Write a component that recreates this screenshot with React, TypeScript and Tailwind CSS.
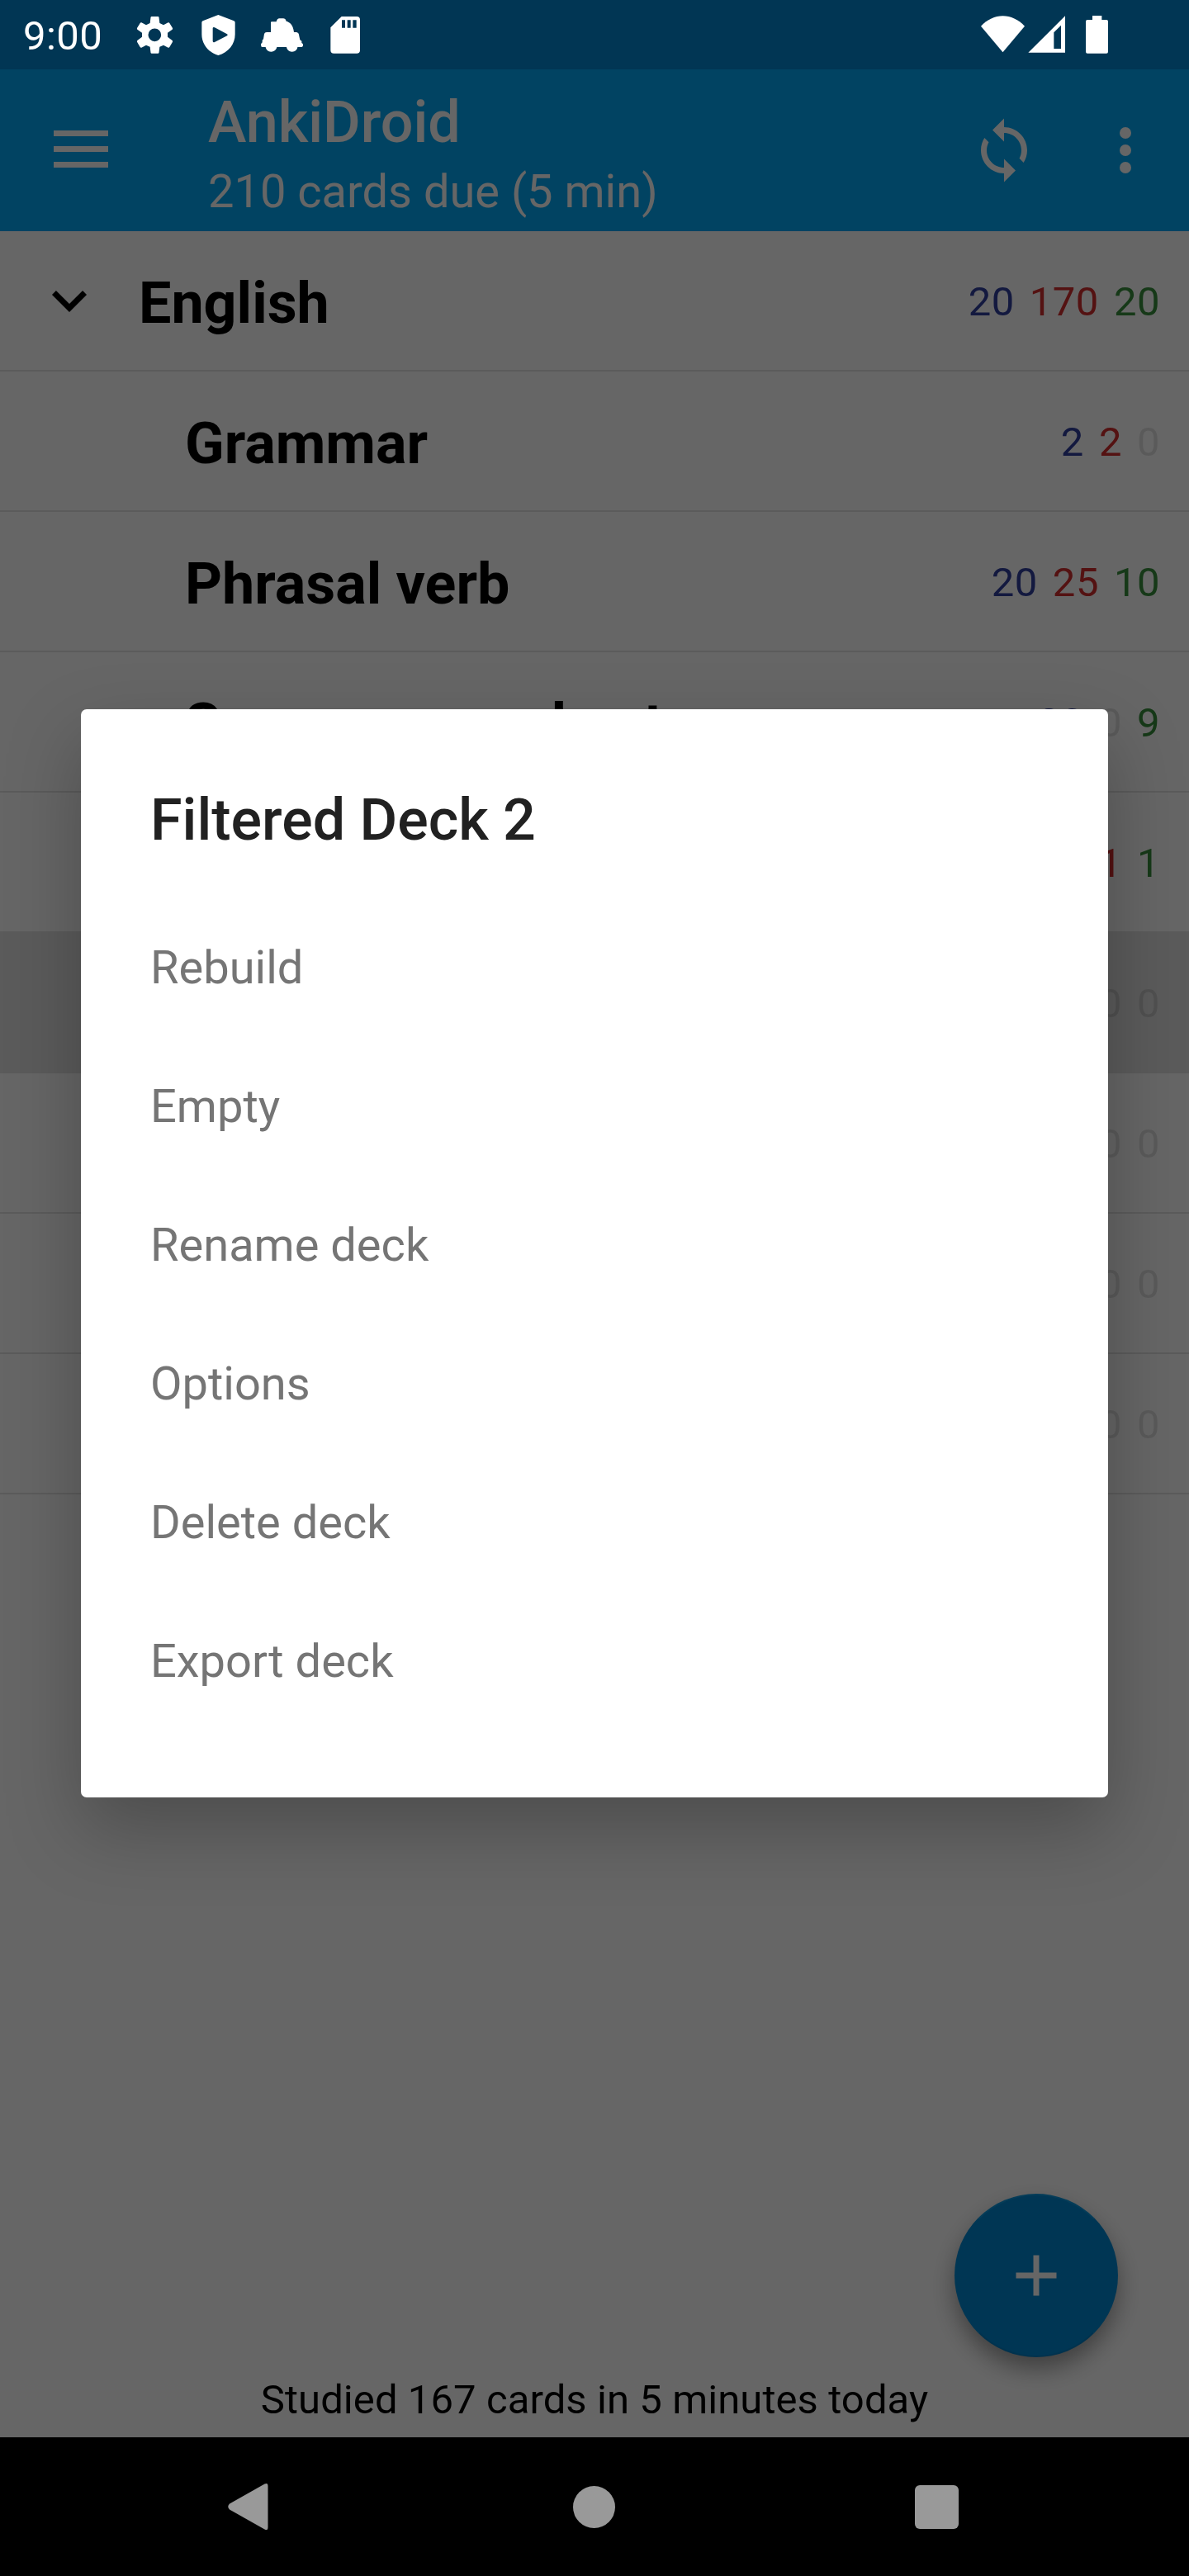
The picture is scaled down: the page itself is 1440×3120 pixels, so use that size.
import React from "react";

type Deck = {
  name: string;
  counts: [number, number, number];
  parent?: boolean;
  selected?: boolean;
};

const decks: Deck[] = [
  { name: "English", counts: [20, 170, 20], parent: true },
  { name: "Grammar", counts: [2, 2, 0] },
  { name: "Phrasal verb", counts: [20, 25, 10] },
  { name: "Synonyms and antonyms", counts: [20, 0, 9] },
  { name: "", counts: [0, 1, 1] },
  { name: "", counts: [0, 0, 0], selected: true },
  { name: "", counts: [0, 0, 0] },
  { name: "", counts: [0, 0, 0] },
  { name: "", counts: [0, 0, 0] },
];

const actions = ["Rebuild", "Empty", "Rename deck", "Options", "Delete deck", "Export deck"];

const countColors = ["text-[#303f9f]", "text-[#d32f2f]", "text-[#388e3c]"];

function StatusBar() {
  return (
    <header className="flex h-[84px] bg-[#013654] text-white">
      <div className="w-[162px] pt-[5px] pl-7 text-[49px] leading-[78px] tracking-[0.4px]">9:00</div>
      <svg className="h-[84px] w-[51px]" viewBox="486 0 153 252" fill="currentColor">
        <path
          fillRule="evenodd"
          d="M551 60H574Q577 60 577.500 63L580 84L594 91L611 82Q614 81 616 84L627 102Q628 105 626 107L609 119V134L626 147Q628 149 627 152L616 171Q614 174 611 173L594 164L580 170L577.500 191Q577 194 574 194H551Q548 194 547.500 191L545 170L531 164L514 173Q511 174 509 171L498 152Q497 149 499 147L516 134V119L499 107Q497 105 498 102L509 84Q511 81 514 82L531 91L545 84L547.500 63Q548 60 551 60ZM562 103.500A23.500 23.500 0 1 0 562 150.500A23.500 23.500 0 1 0 562 103.500Z"
        />
      </svg>
      <svg className="ml-[26px] h-[84px] w-[51px]" viewBox="717 0 153 252" fill="currentColor">
        <path
          fillRule="evenodd"
          d="M793 54L850 76Q854 78 854 82V125C854 160 830 190 793 201C757 190 733 160 733 125V82Q733 78 737 76ZM773 102V150Q774 156 780 153L825 130Q829 127 825 124L780 100Q774 97 773 102Z"
        />
      </svg>
      <svg className="ml-[25px] h-[84px] w-[53px]" viewBox="945 0 159 252" fill="currentColor">
        <path d="M984 82Q984 79 987 79H1004Q1007 67 1015 67H1029Q1037 67 1040 77C1054 81 1066 92 1068 117H1077Q1086 118 1087 131L1090 145L1096 149V156L1101 160V167L1097 171H1081C1080 181 1072 188 1061 188C1050 188 1043 181 1041 171H1006C1004 181 996 188 985 188C974 188 967 181 965 171H951Q948 168 948 160L953 154V146L957 142L960 123Q962 117 969 117H984Z" />
      </svg>
      <svg className="ml-[25px] h-[84px] w-[51px]" viewBox="1179 0 153 252" fill="currentColor">
        <path
          fillRule="evenodd"
          d="M1241 60H1296Q1308 60 1308 72V182Q1308 194 1296 194H1213Q1201 194 1201 182V100ZM1242 73V101H1254V73ZM1262 73V101H1274V73ZM1282 73V101H1295V73Z"
        />
      </svg>
      <div className="ml-[744px] flex">
        <svg className="h-[84px] w-[54px]" viewBox="144 0 162 252" fill="currentColor">
          <path d="M144 95C190 45 257 45 303 95L223.500 190Z" />
        </svg>
        <svg className="ml-[3px] h-[84px] w-[46px]" viewBox="315 0 138 252" fill="currentColor">
          <path fillRule="evenodd" d="M316 191.500L450 58V191.500ZM409 118V177H435V92Z" />
        </svg>
        <svg className="ml-[23px] h-[84px] w-[30px]" viewBox="522 0 90 252" fill="currentColor">
          <path d="M549 57H583V72H600Q606 72 606 78V188Q606 194 600 194H531Q525 194 525 188V78Q525 72 531 72H549Z" />
        </svg>
      </div>
    </header>
  );
}

function AppBar() {
  return (
    <div className="flex h-[196px] items-center bg-[#03a9f4] text-white">
      <div className="ml-[65px] flex w-[66px] flex-col gap-3 pb-[3px]">
        <span className="h-[7px] bg-white" />
        <span className="h-[7px] bg-white" />
        <span className="h-[7px] bg-white" />
      </div>
      <div className="ml-[121px] flex-1 pt-[13px]">
        <h1 className="text-[70px] leading-[82px] font-medium">AnkiDroid</h1>
        <p className="mt-[5px] text-[56px] leading-[76px]">210 cards due (5 min)</p>
      </div>
      <svg className="mr-[63px] size-[84px]" viewBox="0 0 24 24" fill="currentColor">
        <path d="M12 4V1L8 5l4 4V6c3.310 0 6 2.690 6 6 0 1.010-.250 1.970-.700 2.800l1.460 1.460C19.540 15.030 20 13.570 20 12c0-4.420-3.580-8-8-8zm0 14c-3.310 0-6-2.690-6-6 0-1.010.250-1.970.700-2.800L5.240 7.740C4.460 8.970 4 10.430 4 12c0 4.420 3.580 8 8 8v3l4-4-4-4v3z" />
      </svg>
      <svg className="mr-[35px] size-[84px]" viewBox="0 0 24 24" fill="currentColor">
        <circle cx="12" cy="6" r="2" />
        <circle cx="12" cy="12" r="2" />
        <circle cx="12" cy="18" r="2" />
      </svg>
    </div>
  );
}

function DeckRow({ deck }: { deck: Deck }) {
  return (
    <li
      className={`flex h-[170px] items-center border-b-2 border-[#e4e4e4] pr-[35px] ${
        deck.selected ? "bg-[#e4e4e4]" : ""
      }`}
    >
      {deck.parent ? (
        <svg className="ml-[42px] size-[84px]" viewBox="0 0 24 24">
          <path d="M16.590 8.590L12 13.170 7.410 8.590 6 10l6 6 6-6z" />
        </svg>
      ) : null}
      <span
        className={`flex-1 pt-[6px] text-[70px] leading-[82px] font-bold ${
          deck.parent ? "ml-[42px]" : "ml-[224px]"
        }`}
      >
        {deck.name}
      </span>
      <div className="flex gap-[18px] pt-1 text-[49px] leading-[58px] tracking-[0.5px]">
        {deck.counts.map((count, i) => (
          <span key={i} className={count === 0 ? "text-black/12" : countColors[i]}>
            {count}
          </span>
        ))}
      </div>
    </li>
  );
}

function DeckDialog() {
  return (
    <section
      role="dialog"
      className="absolute top-[859px] left-[98px] h-[1318px] w-[1244px] rounded-[7px] bg-white px-[84px] pt-[90px] shadow-[0_38px_90px_rgba(0,0,0,0.25)]"
    >
      <h2 className="text-[70px] leading-[88px] font-medium text-[#212121]">Filtered Deck 2</h2>
      <ul className="mt-[51px]">
        {actions.map((action) => (
          <li key={action} className="flex h-[168px] items-center text-[56px] text-[#757575]">
            {action}
          </li>
        ))}
      </ul>
    </section>
  );
}

function NavigationBar() {
  return (
    <nav className="flex h-[168px] items-center bg-black text-[#999999]">
      <svg className="ml-[276px] h-[58px] w-[50px]" viewBox="0 0 50 58" fill="currentColor">
        <path d="M44.500 1.500Q48.500-.500 48.500 4V54Q48.500 58.500 44.500 56.500L2 32.500Q-1.500 29 2 25.500Z" />
      </svg>
      <span className="ml-[368px] size-[51px] rounded-full bg-[#999999]" />
      <span className="ml-[363px] size-[53px] rounded-md bg-[#999999]" />
    </nav>
  );
}

export default function App() {
  return (
    <div className="relative h-[3120px] w-[1440px] overflow-hidden bg-white font-['Roboto',sans-serif]">
      <StatusBar />
      <main className="relative flex h-[2868px] flex-col bg-white text-black">
        <AppBar />
        <ul>
          {decks.map((deck, i) => (
            <DeckRow key={i} deck={deck} />
          ))}
        </ul>
        <p className="mt-auto mb-4 text-center text-[49px] leading-[58px] tracking-[0.08px]">
          Studied 167 cards in 5 minutes today
        </p>
        <button className="absolute right-[86px] bottom-[97px] flex size-[198px] items-center justify-center rounded-full border-2 border-t-[#0d96dc] border-r-[#0288d1] border-b-[#027ec2] border-l-[#0288d1] bg-[#0288d1] text-white shadow-[0_14px_28px_rgba(0,0,0,0.38)]">
          <svg className="size-[84px]" viewBox="0 0 24 24" fill="currentColor">
            <path d="M19 13h-6v6h-2v-6H5v-2h6V5h2v6h6v2z" />
          </svg>
        </button>
        <div className="absolute inset-0 bg-black/60" />
      </main>
      <NavigationBar />
      <DeckDialog />
    </div>
  );
}
